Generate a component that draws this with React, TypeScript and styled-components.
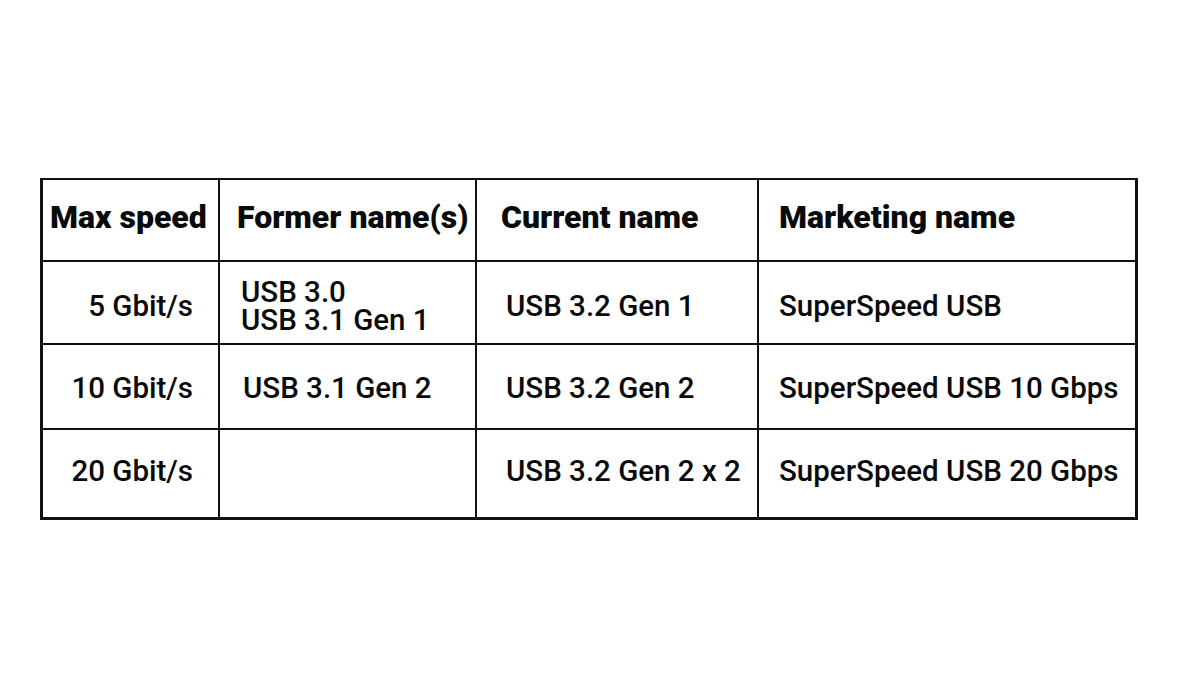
import { Fragment } from "react";
import styled, { createGlobalStyle } from "styled-components";

const GlobalStyle = createGlobalStyle`
  html, body {
    margin: 0;
    padding: 0;
    background: #ffffff;
  }
  body {
    font-family: Roboto, "Liberation Sans", sans-serif;
    color: #0a0a0a;
  }
`;

const Page = styled.div`
  width: 1200px;
  height: 675px;
  box-sizing: border-box;
  padding: 178px 0 0 40px;
  background: #ffffff;
`;

const Table = styled.div`
  display: grid;
  grid-template-columns: 175px 255px 280px 376px;
  grid-template-rows: 80px 81px 83px 87px;
  gap: 2px;
  width: max-content;
  padding: 2px 3px 3px 3px;
  background: #111111;
`;

const Cell = styled.div<{ $align?: "left" | "right"; $pl?: number; $pr?: number; $dy?: number }>`
  background: #ffffff;
  display: flex;
  flex-direction: column;
  justify-content: center;
  align-items: ${(p) => (p.$align === "right" ? "flex-end" : "flex-start")};
  padding-left: ${(p) => p.$pl ?? 0}px;
  padding-right: ${(p) => p.$pr ?? 0}px;
  padding-top: ${(p) => Math.max(0, (p.$dy ?? 0) * 2)}px;
  padding-bottom: ${(p) => Math.max(0, -(p.$dy ?? 0) * 2)}px;
  font-size: 29.5px;
  font-weight: 500;
  line-height: 28px;
  white-space: nowrap;
`;

const HeadCell = styled(Cell)`
  font-size: 32px;
  font-weight: 900;
  line-height: 36px;
  padding-bottom: 6px;
`;

const Line = styled.span<{ $shift?: number }>`
  display: block;
  margin-left: ${(p) => p.$shift ?? 0}px;
`;

type Row = {
  speed: string;
  former: string[];
  current: string;
  marketing: string;
  dy: number;
};

const rows: Row[] = [
  { speed: "5 Gbit/s", former: ["USB 3.0", "USB 3.1 Gen 1"], current: "USB 3.2 Gen 1", marketing: "SuperSpeed USB", dy: 3 },
  { speed: "10 Gbit/s", former: ["USB 3.1 Gen 2"], current: "USB 3.2 Gen 2", marketing: "SuperSpeed USB 10 Gbps", dy: 1 },
  { speed: "20 Gbit/s", former: [], current: "USB 3.2 Gen 2 x 2", marketing: "SuperSpeed USB 20 Gbps", dy: -3 },
];

export default function App() {
  return (
    <>
      <GlobalStyle />
      <Page>
        <Table>
          <HeadCell $pl={7}>Max speed</HeadCell>
          <HeadCell $pl={17}>Former name(s)</HeadCell>
          <HeadCell $pl={24}>Current name</HeadCell>
          <HeadCell $pl={20}>Marketing name</HeadCell>
          {rows.map((r) => (
            <Fragment key={r.speed}>
              <Cell $align="right" $pr={25} $dy={r.dy}>{r.speed}</Cell>
              <Cell $pl={21} $dy={r.dy}>
                {r.former.map((f) => (
                  <Line key={f} $shift={r.former.length === 1 ? 2 : 0}>{f}</Line>
                ))}
              </Cell>
              <Cell $pl={29} $dy={r.dy}>{r.current}</Cell>
              <Cell $pl={20} $dy={r.dy}>{r.marketing}</Cell>
            </Fragment>
          ))}
        </Table>
      </Page>
    </>
  );
}
